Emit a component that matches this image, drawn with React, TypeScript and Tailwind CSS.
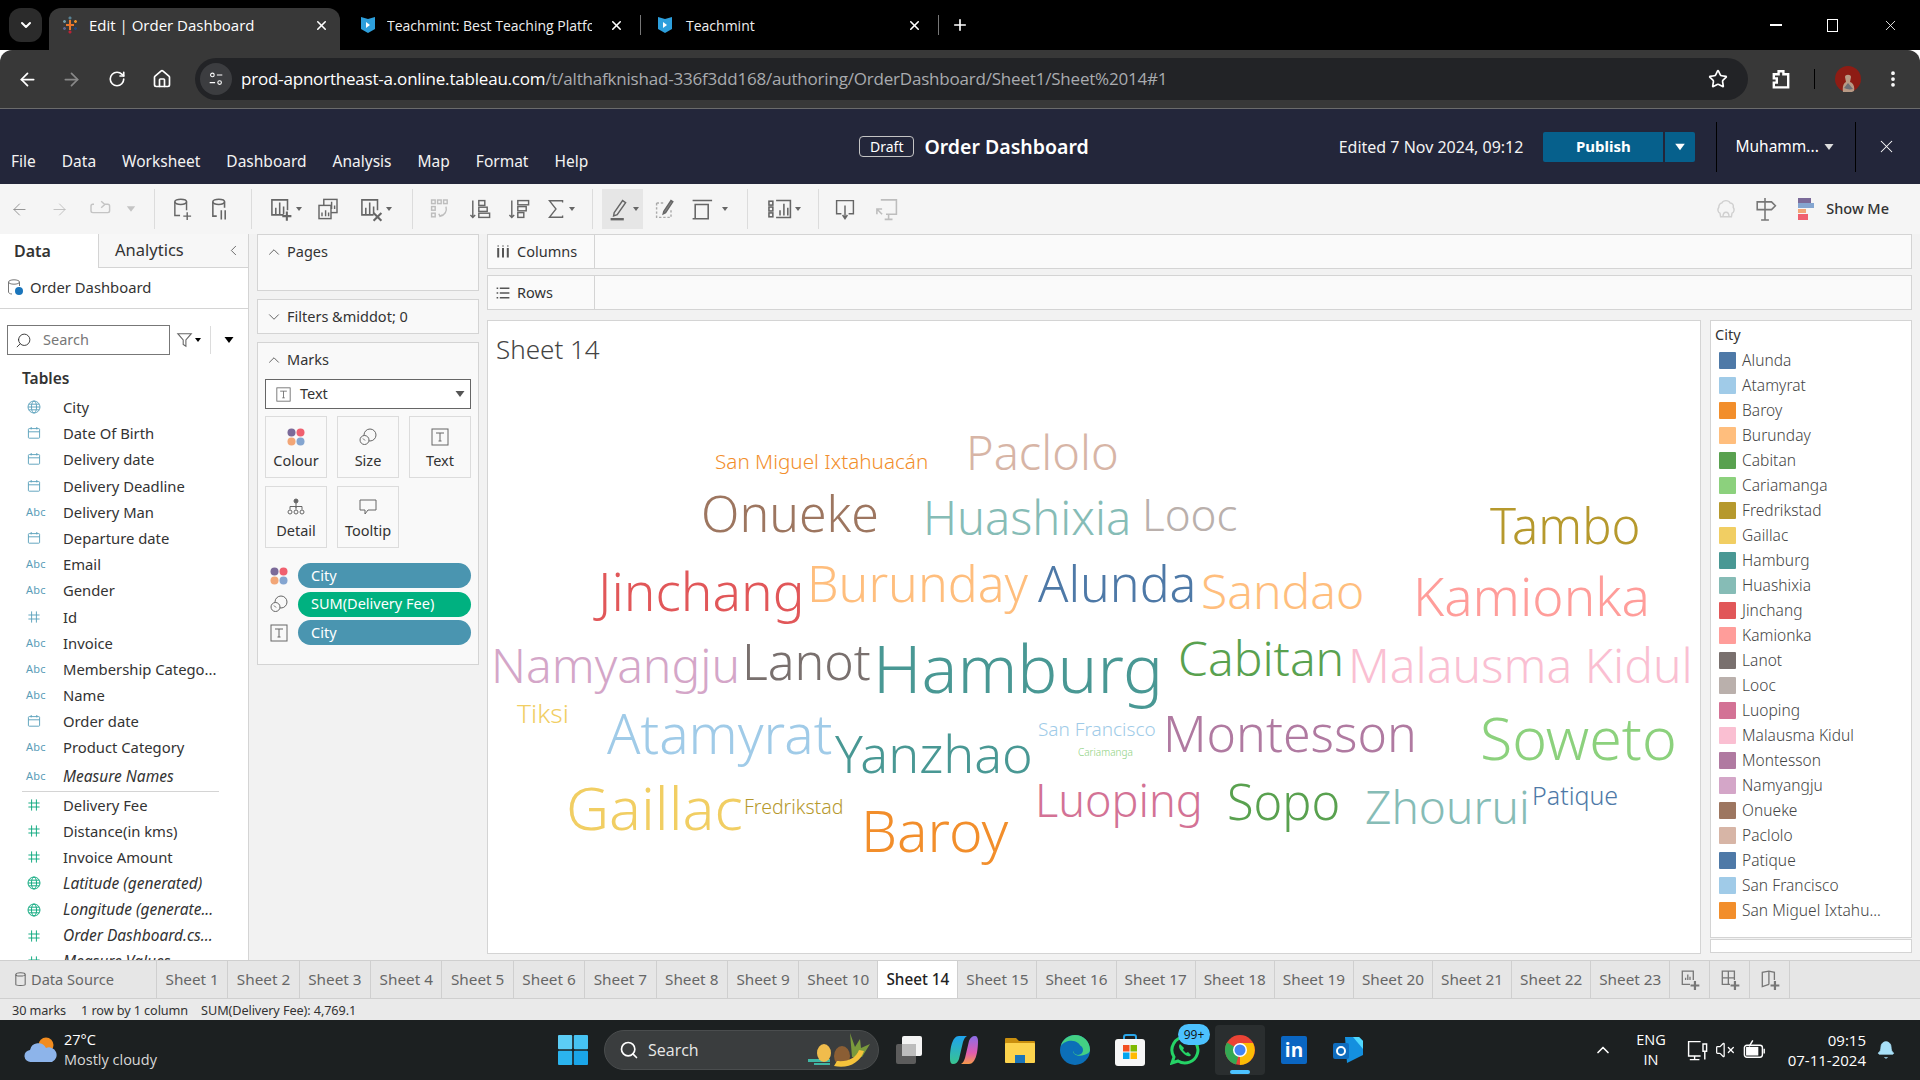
import { ArrowLeft, ArrowRight, Bell, ChevronDown, ChevronLeft, ChevronUp, Home, MoreVertical, Plus, RotateCw, Search, Star, VolumeX, X } from 'lucide-react';

const tableau20 = ['#4e79a7', '#a0cbe8', '#f28e2b', '#ffbe7d', '#59a14f', '#8cd17d', '#b6992d', '#f1ce63', '#499894', '#86bcb6', '#e15759', '#ff9d9a', '#79706e', '#bab0ac', '#d37295', '#fabfd2', '#b07aa1', '#d4a6c8', '#9d7660', '#d7b5a6', '#4e79a7', '#a0cbe8', '#f28e2b'];
const legend = ['Alunda', 'Atamyrat', 'Baroy', 'Burunday', 'Cabitan', 'Cariamanga', 'Fredrikstad', 'Gaillac', 'Hamburg', 'Huashixia', 'Jinchang', 'Kamionka', 'Lanot', 'Looc', 'Luoping', 'Malausma Kidul', 'Montesson', 'Namyangju', 'Onueke', 'Paclolo', 'Patique', 'San Francisco', 'San Miguel Ixtahu...'];

const words = [
  ['San Miguel Ixtahuacán', 'left-[227px] top-[140px] text-[20.7px] text-[#f28e2b]'],
  ['Paclolo', 'left-[478px] top-[131px] text-[47px] text-[#d7b5a6]'],
  ['Onueke', 'left-[213px] top-[192px] text-[50px] text-[#9d7660]'],
  ['Huashixia', 'left-[435px] top-[196px] text-[47px] text-[#86bcb6]'],
  ['Looc', 'left-[654px] top-[193px] text-[44px] text-[#bab0ac]'],
  ['Tambo', 'left-[1002px] top-[204px] text-[49px] text-[#b6992d]'],
  ['Jinchang', 'left-[110px] top-[270px] text-[53.2px] text-[#e15759]'],
  ['Burunday', 'left-[319px] top-[262px] text-[50px] text-[#ffbe7d]'],
  ['Alunda', 'left-[550px] top-[262px] text-[50px] text-[#4e79a7]'],
  ['Sandao', 'left-[713px] top-[270px] text-[48px] text-[#ffbe7d]'],
  ['Kamionka', 'left-[925px] top-[274px] text-[53px] text-[#ff9d9a]'],
  ['Namyangju', 'left-[3px] top-[344px] text-[48px] text-[#d4a6c8]'],
  ['Lanot', 'left-[254px] top-[340px] text-[50px] text-[#79706e]'],
  ['Hamburg', 'left-[385px] top-[346px] text-[67px] text-[#499894]'],
  ['Cabitan', 'left-[690px] top-[337px] text-[48px] text-[#59a14f]'],
  ['Malausma Kidul', 'left-[860px] top-[344px] text-[48px] text-[#fabfd2]'],
  ['Tiksi', 'left-[29px] top-[392px] text-[26.5px] text-[#f1ce63]'],
  ['Atamyrat', 'left-[119px] top-[411px] text-[55px] text-[#a0cbe8]'],
  ['Yanzhao', 'left-[347px] top-[432px] text-[52px] text-[#499894]'],
  ['San Francisco', 'left-[550px] top-[408px] text-[19px] text-[#a0cbe8]'],
  ['Cariamanga', 'left-[590px] top-[431px] text-[10px] text-[#8cd17d]'],
  ['Montesson', 'left-[675px] top-[412px] text-[50px] text-[#b07aa1]'],
  ['Soweto', 'left-[992px] top-[416px] text-[59px] text-[#8cd17d]'],
  ['Gaillac', 'left-[78px] top-[486px] text-[59.5px] text-[#f1ce63]'],
  ['Fredrikstad', 'left-[256px] top-[486px] text-[19.5px] text-[#b6992d]'],
  ['Baroy', 'left-[373px] top-[509px] text-[57px] text-[#f28e2b]'],
  ['Luoping', 'left-[547px] top-[478px] text-[45px] text-[#d37295]'],
  ['Sopo', 'left-[739px] top-[480px] text-[48.7px] text-[#59a14f]'],
  ['Zhourui', 'left-[877px] top-[485px] text-[46px] text-[#86bcb6]'],
  ['Patique', 'left-[1044px] top-[474px] text-[25px] text-[#4e79a7]'],
];

type Kind = 'geo' | 'date' | 'abc' | 'num' | 'mnum' | 'mgeo';
const fields: [Kind, string, boolean?][] = [
  ['geo', 'City'], ['date', 'Date Of Birth'], ['date', 'Delivery date'], ['date', 'Delivery Deadline'], ['abc', 'Delivery Man'], ['date', 'Departure date'], ['abc', 'Email'], ['abc', 'Gender'], ['num', 'Id'], ['abc', 'Invoice'], ['abc', 'Membership Catego...'], ['abc', 'Name'], ['date', 'Order date'], ['abc', 'Product Category'],
];
const measures: [Kind, string, boolean?][] = [
  ['mnum', 'Delivery Fee'], ['mnum', 'Distance(in kms)'], ['mnum', 'Invoice Amount'], ['mgeo', 'Latitude (generated)', true], ['mgeo', 'Longitude (generate...', true], ['mnum', 'Order Dashboard.cs...', true], ['mnum', 'Measure Values', true],
];
const sheets = [1, 2, 3, 4, 5, 6, 7, 8, 9, 10, 14, 15, 16, 17, 18, 19, 20, 21, 22, 23];

function Glyph({ className, children, size = 20 }: { className?: string; children: React.ReactNode; size?: number }) {
  return (
    <svg width={size} height={size} viewBox="0 0 20 20" fill="none" stroke="currentColor" strokeWidth="1.2" className={className}>
      {children}
    </svg>
  );
}

function Caret({ className = 'text-[#666]' }: { className?: string }) {
  return <span className={`inline-block h-0 w-0 shrink-0 border-x-[3px] border-t-[4px] border-x-transparent border-t-current ${className}`} />;
}

function FieldIcon({ kind }: { kind: Kind }) {
  const blue = 'text-[#5ea3bd]';
  const green = 'text-[#10a97f]';
  if (kind === 'abc') return <span className="w-[22px] text-[11px] tracking-[0.2px] text-[#5a9db8]">Abc</span>;
  if (kind === 'date') {
    return (
      <Glyph size={16} className={blue}>
        <rect x="3" y="4.5" width="14" height="12" rx="1" />
        <path d="M3 8.5h14M6.5 2.5v3M13.5 2.5v3" />
      </Glyph>
    );
  }
  if (kind === 'num' || kind === 'mnum') {
    return (
      <Glyph size={16} className={kind === 'num' ? blue : green}>
        <path d="M7 3v14M13 3v14M3 7.5h14M3 12.5h14" />
      </Glyph>
    );
  }
  return (
    <Glyph size={16} className={kind === 'geo' ? blue : green}>
      <circle cx="10" cy="10" r="7.5" />
      <ellipse cx="10" cy="10" rx="3.2" ry="7.5" />
      <path d="M2.5 10h15M3.5 6.5h13M3.5 13.5h13" />
    </Glyph>
  );
}

function FieldRow({ kind, name, italic }: { kind: Kind; name: string; italic?: boolean }) {
  return (
    <div className="flex h-[26.2px] items-center">
      <span className="flex w-[63px] shrink-0 justify-start pl-[26px]"><FieldIcon kind={kind} /></span>
      <span className={`whitespace-nowrap text-[#333] ${italic ? 'text-[15.5px] italic' : 'text-[14.8px]'}`}>{name}</span>
    </div>
  );
}

function ColourDots({ size = 18 }: { size?: number }) {
  return (
    <svg width={size} height={size} viewBox="0 0 18 18">
      <circle cx="4.5" cy="4.5" r="4" fill="#7b6a99" />
      <circle cx="13.5" cy="4.5" r="4" fill="#f0606f" />
      <circle cx="4.5" cy="13.5" r="4" fill="#f2a677" />
      <circle cx="13.5" cy="13.5" r="4" fill="#84a5d0" />
    </svg>
  );
}

function SizeIcon() {
  return (
    <svg width="18" height="18" viewBox="0 0 18 18" fill="none" stroke="#666" strokeWidth="1">
      <circle cx="11" cy="7" r="6" />
      <circle cx="5.5" cy="12" r="4.5" fill="#f9f9f9" />
      <path d="M4 10.5l2 2" />
    </svg>
  );
}

function TextBox({ size = 18 }: { size?: number }) {
  return (
    <svg width={size} height={size} viewBox="0 0 18 18" fill="none" stroke="#666" strokeWidth="1">
      <rect x="1" y="1" width="16" height="16" />
      <path d="M5 5h8M9 5v8M7.5 13h3" />
    </svg>
  );
}

function MarkButton({ label, children }: { label: string; children: React.ReactNode }) {
  return (
    <div className="flex h-[62px] w-[62px] flex-col items-center border border-[#dcdcdc] pt-[10px]">
      <div className="flex h-[20px] items-center">{children}</div>
      <span className="mt-[4px] text-[14.5px] leading-[18px] text-[#333]">{label}</span>
    </div>
  );
}

function ToolIcon({ w, children, dropdown, active }: { w: string; children: React.ReactNode; dropdown?: boolean; active?: boolean }) {
  return (
    <div className={`flex h-[40px] shrink-0 items-center justify-center gap-[2px] text-[#666] ${w} ${active ? 'bg-[#e6e6e6]' : ''}`}>
      {children}
      {dropdown && <Caret />}
    </div>
  );
}

function Sep({ className }: { className: string }) {
  return <div className={`h-[40px] w-px shrink-0 bg-[#dcdcdc] ${className}`} />;
}

function Toolbar() {
  return (
    <div className="flex h-[50px] items-center bg-[#f5f5f5] pl-[6px] pr-[31px]">
      <ToolIcon w="w-[26px]"><ArrowLeft size={19} strokeWidth={1.1} className="text-[#888]" /></ToolIcon>
      <ToolIcon w="w-[26px] ml-[14px]"><ArrowRight size={19} strokeWidth={1.1} className="text-[#bbb]" /></ToolIcon>
      <ToolIcon w="w-[54px] ml-[12px]">
        <Glyph size={24} className="text-[#c4c4c4]"><path d="M13 6h3.5a1.5 1.5 0 0 1 1.5 1.5v4a1.5 1.5 0 0 1-1.5 1.5H4a1.5 1.5 0 0 1-1.5-1.5v-4A1.5 1.5 0 0 1 4 6h1M11 3.5l3 2.7-3 2.7" /></Glyph>
        <Caret className="ml-[14px] scale-[1.4] text-[#c4c4c4]" />
      </ToolIcon>
      <Sep className="ml-[16px] mr-[7px]" />
      <ToolIcon w="w-[40px]">
        <Glyph size={26}><ellipse cx="9" cy="4.5" rx="4.5" ry="2" /><path d="M4.5 4.5v10.5h4M13.5 4.5V11M14 12.5v6M11 15.5h6" strokeWidth="1.1" /></Glyph>
      </ToolIcon>
      <ToolIcon w="w-[36px]">
        <Glyph size={26}><ellipse cx="9" cy="4.5" rx="4.5" ry="2" /><path d="M4.5 4.5v11h3M13.5 4.5V9M11 11v7M14 11v7" /></Glyph>
      </ToolIcon>
      <Sep className="ml-[13px] mr-[13px] w-[2px]" />
      <ToolIcon w="w-[40px]" dropdown>
        <Glyph size={26}><path d="M12 14.5H3V3h12v8M6 14V9M9 14V5M12 14V8" /><path d="M14.5 12v7M11 15.5h7" strokeWidth="1.6" /></Glyph>
      </ToolIcon>
      <ToolIcon w="w-[34px] ml-[6px]">
        <Glyph size={24}><rect x="6.5" y="2" width="11" height="11" /><rect x="2.5" y="7" width="10" height="11" fill="#f5f5f5" /><path d="M5 16v-3M8 16v-5M10.5 16v-3M13 10V4M15.5 10V7" /></Glyph>
      </ToolIcon>
      <ToolIcon w="w-[40px] ml-[10px]" dropdown>
        <Glyph size={26}><path d="M12 14.5H3V3h12v8M6 14V9M9 14V5M12 14V8" /><path d="M12 13l6 6M18 13l-6 6" strokeWidth="1.6" /></Glyph>
      </ToolIcon>
      <Sep className="ml-[17px] mr-[10px]" />
      <ToolIcon w="w-[34px]">
        <Glyph size={24} className="text-[#bdbdbd]"><rect x="3" y="2.5" width="3" height="3" /><rect x="8" y="2.5" width="3" height="3" /><rect x="13" y="2.5" width="3" height="3" /><rect x="3" y="8" width="3" height="3" /><rect x="3" y="13.5" width="3" height="3" /><path d="M15 8c1 4-1 7-5 8M9 14l1 2 2-1" /></Glyph>
      </ToolIcon>
      <ToolIcon w="w-[30px] ml-[8px]">
        <Glyph size={24}><path d="M4 3v14M2 15l2 2 2-2" /><rect x="9" y="3" width="5" height="4" /><rect x="9" y="8.5" width="7" height="3.5" /><rect x="9" y="13.5" width="9" height="3.5" /></Glyph>
      </ToolIcon>
      <ToolIcon w="w-[30px] ml-[9px]">
        <Glyph size={24}><path d="M4 3v14M2 15l2 2 2-2" /><rect x="9" y="3" width="9" height="3.5" /><rect x="9" y="8" width="7" height="3.5" /><rect x="9" y="13" width="5" height="4" /></Glyph>
      </ToolIcon>
      <ToolIcon w="w-[30px] ml-[11px]" dropdown>
        <Glyph size={22}><path d="M16 4V2.5H4l6 7.5-6 7.5h12V16" /></Glyph>
      </ToolIcon>
      <Sep className="ml-[17px] mr-[9px]" />
      <ToolIcon w="w-[41px]" dropdown active>
        <Glyph size={24}><path d="M6 13l7-10 2.5 1.7-7 10-3 1z" /><path d="M3 18.5h11" strokeWidth="2" /></Glyph>
      </ToolIcon>
      <ToolIcon w="w-[30px] ml-[7px]">
        <Glyph size={24} className="text-[#aaa]"><path d="M3 5h7M3 5v12h12v-7" strokeDasharray="2 1.5" /><path d="M9 12l6-9 1.5 1-6 9-2 1z" fill="#888" stroke="#666" /></Glyph>
      </ToolIcon>
      <ToolIcon w="w-[38px] ml-[10px]">
        <Glyph size={26}><path d="M2 3.5h15M4 6.5h10v11H4zM2 17.5h3M14 6.5v11" /></Glyph>
        <Caret className="ml-[4px]" />
      </ToolIcon>
      <Sep className="ml-[19px] mr-[16px]" />
      <ToolIcon w="w-[40px]" dropdown>
        <Glyph size={26}><rect x="1.5" y="4" width="3" height="3" /><rect x="1.5" y="8.5" width="3" height="3" /><rect x="1.5" y="13" width="3" height="3" /><path d="M7 3.5h11v13H7" /><path d="M10 15v-4M13 15V6M16 15v-6" /></Glyph>
      </ToolIcon>
      <Sep className="ml-[14px] mr-[12px]" />
      <ToolIcon w="w-[28px]">
        <Glyph size={24}><path d="M7 14H3V3h14v11h-4M10 7v10M8 15l2 3 2-3" /></Glyph>
      </ToolIcon>
      <ToolIcon w="w-[28px] ml-[13px]">
        <Glyph size={26} className="text-[#bdbdbd]"><path d="M6 3h12v11H10M12 14v4M9 18h6M3 10l4 4M3 14V10h4" /></Glyph>
      </ToolIcon>
      <div className="ml-auto flex items-center">
        <Glyph size={24} className="text-[#d0d0d0]"><path d="M10 3c2 0 3 1 3.5 2 2 0 3 2 2.5 3.5 1.5 2 .5 4.5-1 5l-.5 3h-9l-.5-3c-1.5-.5-2.5-3-1-5C4 7 5 5 6.5 5 7 4 8 3 10 3z" /><path d="M7.5 16.5c0-5 5-5 5 0" /></Glyph>
        <Glyph size={26} className="ml-[14px] text-[#777]"><path d="M10 1.5v17M7 18.5h6M4 4.5h11l3 3-3 3H4z" /></Glyph>
        <svg width="16" height="22" viewBox="0 0 16 22" className="ml-[20px]">
          <rect x="0" y="0" width="13" height="5" fill="#7b6a99" />
          <rect x="0" y="5" width="16" height="5" fill="#84a5d0" />
          <rect x="0" y="11" width="8" height="4" fill="#f2a677" />
          <rect x="0" y="16" width="10" height="6" fill="#f0606f" />
        </svg>
        <span className="ml-[12px] text-[14.5px] font-medium text-[#333]">Show Me</span>
      </div>
    </div>
  );
}

function TableauLogo() {
  return (
    <svg width="18" height="18" viewBox="0 0 18 18" strokeWidth="1.5" fill="none">
      <path d="M9 4v10M5 9h8" stroke="#e8762c" strokeWidth="2" />
      <path d="M9 .5v3M7.5 2h3" stroke="#5b879b" />
      <path d="M9 14.5v3M7.5 16h3" stroke="#c72035" />
      <path d="M3.5 4v3M2 5.5h3" stroke="#7099a6" />
      <path d="M14.5 4v3M13 5.5h3" stroke="#eb9129" />
      <path d="M3.5 11v3M2 12.5h3" stroke="#5b6591" />
      <path d="M14.5 11v3M13 12.5h3" stroke="#1f457e" />
    </svg>
  );
}

function TeachmintLogo() {
  return (
    <svg width="16" height="18" viewBox="0 0 16 18" className="shrink-0">
      <path d="M1 1l7 2 7-2v12l-7 4-7-4z" fill="#2d9fdc" />
      <path d="M6 6l4 3-4 3z" fill="#fff" />
    </svg>
  );
}

function BrowserChrome() {
  return (
    <div className="font-['Open_Sans',sans-serif]">
      <div className="flex h-[50px] bg-black pl-[9px] pt-[8px]">
        <div className="flex h-[34px] w-[33px] items-center justify-center rounded-[12px] bg-[#2b2b2b]"><ChevronDown size={16} strokeWidth={3} className="text-white" /></div>
        <div className="ml-[7px] flex h-[42px] w-[291px] items-center rounded-t-[12px] bg-[#383838] pb-[8px] pl-[12px] pr-[11px] text-[15px] text-white">
          <TableauLogo />
          <span className="ml-[10px] flex-1 whitespace-nowrap">Edit | Order Dashboard</span>
          <X size={15} strokeWidth={2.5} />
        </div>
        <div className="flex h-[42px] w-[301px] items-center pb-[8px] pl-[20px] text-[14px] text-[#eee]">
          <TeachmintLogo />
          <span className="ml-[11px] w-[205px] overflow-hidden whitespace-nowrap">Teachmint: Best Teaching Platform</span>
          <X size={15} strokeWidth={2.5} className="ml-auto text-white" />
          <span className="ml-[16px] h-[20px] w-px shrink-0 bg-[#777]" />
        </div>
        <div className="flex h-[42px] w-[298px] items-center pb-[8px] pl-[16px] text-[14px] text-[#eee]">
          <TeachmintLogo />
          <span className="ml-[13px]">Teachmint</span>
          <X size={15} strokeWidth={2.5} className="ml-auto text-white" />
          <span className="ml-[16px] h-[20px] w-px shrink-0 bg-[#777]" />
        </div>
        <div className="flex h-[42px] items-center pb-[8px] pl-[12px]"><Plus size={18} strokeWidth={2.2} className="text-white" /></div>
        <div className="ml-auto flex h-[42px] items-center pb-[8px] pr-[21px] text-white">
          <span className="mr-[45px] h-[1.5px] w-[12px] bg-white" />
          <span className="mr-[44px] h-[13px] w-[11px] border border-white" />
          <X size={17} strokeWidth={1.2} />
        </div>
      </div>
      <div className="flex h-[59px] items-center rounded-t-[12px] border-b border-[#6b6b6b] bg-[#383838] pl-[17px]">
        <ArrowLeft size={21} strokeWidth={2} className="text-white" />
        <ArrowRight size={21} strokeWidth={2} className="ml-[23px] text-[#888]" />
        <RotateCw size={18} strokeWidth={2.2} className="ml-[26px] text-white" />
        <Home size={20} strokeWidth={2} className="ml-[26px] text-white" />
        <div className="ml-[23px] flex h-[42px] w-[1553px] items-center rounded-full bg-[#222326] pl-[5px] pr-[20px]">
          <span className="flex h-[32px] w-[32px] items-center justify-center rounded-full bg-[#3c3d40]">
            <Glyph size={18} className="text-white"><circle cx="6" cy="5.5" r="2" /><path d="M11 5.5h6M3 14h6" /><circle cx="14" cy="14" r="2" /></Glyph>
          </span>
          <span className="ml-[9px] whitespace-nowrap text-[17px] tracking-[-0.2px] text-white">prod-apnortheast-a.online.tableau.com<span className="text-[#a9abaf]">/t/althafknishad-336f3dd168/authoring/OrderDashboard/Sheet1/Sheet%2014#1</span></span>
          <Star size={20} strokeWidth={2} className="ml-auto text-white" />
        </div>
        <Glyph size={24} className="ml-[21px] text-white"><path d="M4 6h4V3.5h4V6h4v11H4v-4h2.5V9.5H4z" strokeWidth="2" /></Glyph>
        <span className="ml-[21px] h-[20px] w-px bg-black" />
        <svg width="26" height="26" viewBox="0 0 26 26" className="ml-[20px]">
          <circle cx="13" cy="13" r="13" fill="#8e1c14" />
          <path d="M8 26c-1-6 1-9 3-10l-1-5c0-3 6-3 6 0l-1 5c3 1 5 4 4 9a13 13 0 0 1-11 1z" fill="#b89a85" />
          <path d="M9 22l4-5 5 6a13 13 0 0 1-9-1z" fill="#6d6f76" />
        </svg>
        <MoreVertical size={20} strokeWidth={2.5} className="ml-[22px] text-white" />
      </div>
    </div>
  );
}

function Header() {
  const menus = ['File', 'Data', 'Worksheet', 'Dashboard', 'Analysis', 'Map', 'Format', 'Help'];
  return (
    <div className="flex h-[75px] bg-[#23263a] text-white">
      <div className="flex w-[620px] items-end gap-[26px] pb-[11px] pl-[11px] text-[15.5px] leading-[24px] text-[#f3f3f3]">
        {menus.map((m) => <span key={m}>{m}</span>)}
      </div>
      <div className="ml-[239px] flex h-[75px] flex-1 items-center">
        <span className="rounded-[4px] border border-[#c4c4c4] px-[10px] text-[14px] leading-[19px]">Draft</span>
        <span className="ml-[10px] text-[19.5px] font-semibold">Order Dashboard</span>
        <span className="ml-[250px] text-[16px] text-[#f3f3f3]">Edited 7 Nov 2024, 09:12</span>
        <span className="ml-[20px] flex h-[30px] w-[120px] items-center justify-center rounded-l-[2px] bg-[#06608c] text-[15px] font-bold">Publish</span>
        <span className="ml-[2px] flex h-[30px] w-[30px] items-center justify-center rounded-r-[2px] bg-[#06608c]"><Caret className="scale-[1.6] text-white" /></span>
        <span className="ml-[21px] h-[50px] w-px bg-black" />
        <span className="ml-[18px] text-[15.5px]">Muhamm...</span>
        <Caret className="ml-[7px] scale-[1.5] text-[#ddd]" />
        <span className="ml-[23px] h-[50px] w-px bg-black" />
        <X size={21} strokeWidth={1.2} className="ml-[20px]" />
      </div>
    </div>
  );
}

function DataPane() {
  return (
    <div className="flex w-[249px] shrink-0 flex-col overflow-hidden border-r border-[#d4d4d4] bg-white">
      <div className="flex h-[34px] shrink-0">
        <div className="flex w-[98px] items-center pl-[14px] text-[16px] font-semibold text-[#333]">Data</div>
        <div className="flex flex-1 items-center border-b border-l border-[#d4d4d4] bg-[#f7f7f7] pl-[16px] text-[16.5px] text-[#333]">
          Analytics
          <ChevronLeft size={17} strokeWidth={1.2} className="ml-auto mr-[6px] text-[#555]" />
        </div>
      </div>
      <div className="flex h-[41px] shrink-0 items-center border-b border-[#d4d4d4] pb-[2px] pl-[7px] text-[14.8px] text-[#333]">
        <svg width="17" height="17" viewBox="0 0 17 17" fill="none" stroke="#777">
          <ellipse cx="7" cy="3" rx="5.5" ry="2.2" />
          <path d="M1.5 3v10c0 1 1.5 2 3.5 2M12.5 3v4" />
          <circle cx="12" cy="12" r="4" fill="#1a75bb" stroke="none" />
        </svg>
        <span className="ml-[6px]">Order Dashboard</span>
      </div>
      <div className="mt-[16px] flex h-[30px] shrink-0 items-center pl-[7px]">
        <div className="flex h-[30px] w-[163px] items-center border border-[#777] pl-[7px] text-[14.5px] text-[#777]">
          <Search size={17} strokeWidth={1.3} className="-scale-x-100 text-[#333]" />
          <span className="ml-[11px]">Search</span>
        </div>
        <Glyph size={18} className="ml-[6px] text-[#666]"><path d="M2 3h15l-6 7v7l-3-2v-5z" /></Glyph>
        <Caret className="ml-[1px]" />
        <span className="ml-[9px] h-[28px] w-px bg-[#dcdcdc]" />
        <Caret className="ml-[15px] scale-[1.5]" />
      </div>
      <div className="mt-[13px] flex h-[20px] shrink-0 items-center pl-[22px] text-[15.5px] font-semibold leading-[20px] text-[#333]">Tables</div>
      <div className="mt-[6px]">
        {fields.map(([k, n, i]) => <FieldRow key={n} kind={k} name={n} italic={i} />)}
        <div className="mt-[3px]"><FieldRow kind="abc" name="Measure Names" italic /></div>
        <div className="ml-[22px] mr-[29px] mt-[1px] border-t border-[#d4d4d4]" />
        <div>
          {measures.map(([k, n, i]) => <FieldRow key={n} kind={k} name={n} italic={i} />)}
        </div>
      </div>
    </div>
  );
}

function Card({ title, open, className, children }: { title: string; open: boolean; className: string; children?: React.ReactNode }) {
  return (
    <div className={`border border-[#d4d4d4] bg-[#f9f9f9] ${className}`}>
      <div className="flex h-[33px] items-center pl-[7px] text-[14.5px] text-[#333]">
        {open ? <ChevronUp size={18} strokeWidth={1.2} className="text-[#555]" /> : <ChevronDown size={18} strokeWidth={1.2} className="text-[#555]" />}
        <span className="ml-[4px]">{title}</span>
      </div>
      {children}
    </div>
  );
}

function Pill({ label, green }: { label: string; green?: boolean }) {
  return (
    <div className={`flex h-[25px] w-[173px] items-center rounded-full pl-[13px] text-[14.5px] text-white ${green ? 'bg-[#00b180]' : 'bg-[#4a95b0]'}`}>{label}</div>
  );
}

function ShelvesPane() {
  return (
    <div className="flex w-[238px] shrink-0 flex-col gap-[8px] bg-[#f2f2f2] px-[8px]">
      <Card title="Pages" open className="h-[57px]" />
      <Card title="Filters &amp;middot; 0" open={false} className="h-[35px]" />
      <Card title="Marks" open className="h-[323px]">
        <div className="px-[7px]">
          <div className="mt-[3px] flex h-[30px] items-center border border-[#666] bg-white pl-[10px] pr-[7px] text-[14.5px] text-[#333]">
            <TextBox size={15} />
            <span className="ml-[9px]">Text</span>
            <Caret className="ml-auto scale-[1.5] text-[#555]" />
          </div>
          <div className="mt-[7px] grid grid-cols-[62px_62px_62px] gap-x-[10px] gap-y-[8px]">
            <MarkButton label="Colour"><ColourDots /></MarkButton>
            <MarkButton label="Size"><SizeIcon /></MarkButton>
            <MarkButton label="Text"><TextBox /></MarkButton>
            <MarkButton label="Detail">
              <svg width="18" height="18" viewBox="0 0 18 18" fill="none" stroke="#666">
                <circle cx="9" cy="3" r="2" fill="#666" />
                <path d="M9 5v5M3 8.5h12M3 8.5v3M15 8.5v3M9 8.5v3" />
                <circle cx="3" cy="14" r="2" /><circle cx="9" cy="14" r="2" /><circle cx="15" cy="14" r="2" />
              </svg>
            </MarkButton>
            <MarkButton label="Tooltip">
              <svg width="18" height="18" viewBox="0 0 18 18" fill="none" stroke="#666">
                <path d="M1 2h16v10H9l-3 4v-4H1z" />
              </svg>
            </MarkButton>
          </div>
          <div className="mt-[15px] flex flex-col gap-[3.5px]">
            <div className="flex items-center gap-[10px] pl-[5px]"><ColourDots /><Pill label="City" /></div>
            <div className="flex items-center gap-[10px] pl-[5px]"><SizeIcon /><Pill label="SUM(Delivery Fee)" green /></div>
            <div className="flex items-center gap-[10px] pl-[5px]"><TextBox /><Pill label="City" /></div>
          </div>
        </div>
      </Card>
    </div>
  );
}

function Shelf({ label, icon }: { label: string; icon: React.ReactNode }) {
  return (
    <div className="flex h-[35px] border border-[#d4d4d4] bg-[#fafafa]">
      <div className="flex w-[107px] items-center gap-[6px] border-r border-[#d4d4d4] pl-[7px] text-[14.5px] text-[#333]">
        {icon}
        {label}
      </div>
    </div>
  );
}

function Canvas() {
  return (
    <div className="flex min-w-0 flex-1 flex-col bg-[#f2f2f2] pr-[8px]">
      <Shelf
        label="Columns"
        icon={<Glyph size={16} className="text-[#555]"><path d="M4 5v12M10 5v12M16 5v12" strokeWidth="2.5" /><path d="M3 2.5h2M9 2.5h2M15 2.5h2" strokeWidth="1.5" /></Glyph>}
      />
      <div className="h-[6px]" />
      <Shelf
        label="Rows"
        icon={<Glyph size={16} className="text-[#555]"><path d="M6 4h12M6 10h12M6 16h12" strokeWidth="2" /><path d="M2 4h2M2 10h2M2 16h2" strokeWidth="2" /></Glyph>}
      />
      <div className="mt-[10px] flex min-h-0 flex-1 gap-[9px]">
        <div className="relative h-[634px] flex-1 overflow-hidden border border-[#d4d4d4] bg-white">
          <span className="absolute left-[8px] top-[12px] text-[26px] font-light leading-[32px] text-[#444]">Sheet 14</span>
          {words.map(([t, c]) => (
            <span key={t} className={`absolute -translate-y-1/2 whitespace-nowrap font-light leading-none ${c}`}>{t}</span>
          ))}
        </div>
        <div className="flex w-[202px] shrink-0 flex-col">
          <div className="h-[618px] overflow-hidden border border-[#d4d4d4] bg-white pl-[4px]">
            <div className="mt-[4px] h-[18px] text-[14.5px] leading-[18px] text-[#333]">City</div>
            <div className="mt-[5px]">
              {legend.map((n, i) => (
                <div key={n} className="flex h-[25px] items-center pl-[4px]">
                  <svg width="17" height="17" viewBox="0 0 17 17"><rect width="17" height="17" rx="1" fill={tableau20[i]} /></svg>
                  <span className="ml-[6px] whitespace-nowrap text-[15.5px] font-light tracking-[0.05px] text-[#444]">{n}</span>
                </div>
              ))}
            </div>
          </div>
          <div className="mt-[1px] h-[14px] border border-[#d4d4d4] bg-white" />
        </div>
      </div>
    </div>
  );
}

function SheetTabs() {
  return (
    <div className="flex h-[39px] border-y border-[#cfcfcf] bg-[#e6e6e6] text-[15.3px] text-[#666]">
      <div className="flex w-[157px] items-center border-r border-[#cfcfcf] pl-[12px] text-[14.6px]">
        <Glyph size={17} className="text-[#666]"><ellipse cx="10" cy="4" rx="5.5" ry="2" /><path d="M4.5 4v12c0 1.5 11 1.5 11 0V4" /></Glyph>
        <span className="ml-[2px] whitespace-nowrap">Data Source</span>
      </div>
      {sheets.map((s) => (
        s === 14
          ? <div key={s} className="flex w-[80px] items-center justify-center whitespace-nowrap border-r border-[#cfcfcf] bg-white font-medium text-[#222]">Sheet 14</div>
          : <div key={s} className={`flex items-center whitespace-nowrap border-r border-[#cfcfcf] ${s < 10 ? 'px-[8.5px]' : 'px-[8px]'}`}>Sheet {s}</div>
      ))}
      {[0, 1, 2].map((i) => (
        <div key={i} className="flex w-[40px] items-center justify-center border-r border-[#cfcfcf]">
          <Glyph size={22} className="text-[#777]">
            {i === 0 && <path d="M10 14H3V2h10v8M6 10V8M8 10V5M10 10V7" />}
            {i === 1 && <path d="M10 14H3V2h11v8M8.5 2v12M3 8h11" />}
            {i === 2 && <path d="M9 14l-6 2V3l6-1 5 1v7M9 2v12" />}
            <path d="M14.5 11v8M10.5 15h8" strokeWidth="2" />
          </Glyph>
        </div>
      ))}
    </div>
  );
}

function StatusBar() {
  return (
    <div className="flex h-[21px] items-center bg-[#eaeaea] pl-[12px] pt-[2px] text-[12.7px] tracking-[-0.1px] text-[#333]">
      <span>30 marks</span>
      <span className="ml-[15px]">1 row by 1 column</span>
      <span className="ml-[13px]">SUM(Delivery Fee): 4,769.1</span>
    </div>
  );
}

function Taskbar() {
  return (
    <div className="flex h-[60px] items-center bg-[#1c2021] pl-[24px] font-['Open_Sans',sans-serif] text-white">
      <svg width="34" height="28" viewBox="0 0 34 28">
        <circle cx="22" cy="9" r="7.5" fill="#f28c1f" />
        <path d="M7 26a6 6 0 0 1-1-12 8.5 8.5 0 0 1 16-2 7 7 0 0 1 6 14z" fill="#8db4ea" />
      </svg>
      <div className="ml-[6px] w-[110px] text-[14.5px] leading-[20px]">
        <div>27°C</div>
        <div className="text-[#d8d8d8]">Mostly cloudy</div>
      </div>
      <svg width="30" height="30" viewBox="0 0 30 30" className="ml-[384px]">
        <rect width="14.2" height="14.2" rx="1" fill="#5ccdf5" />
        <rect x="15.8" width="14.2" height="14.2" rx="1" fill="#46c2f2" />
        <rect y="15.8" width="14.2" height="14.2" rx="1" fill="#2bb4ee" />
        <rect x="15.8" y="15.8" width="14.2" height="14.2" rx="1" fill="#1aa5e8" />
      </svg>
      <div className="relative ml-[16px] flex h-[40px] w-[275px] items-center rounded-full border border-[#4a4d4e] bg-[#3a3d3e] pl-[14px] text-[16px] text-[#e8e8e8]">
        <Search size={20} strokeWidth={2} className="text-white" />
        <span className="ml-[9px]">Search</span>
        <svg width="64" height="38" viewBox="0 0 64 38" className="absolute right-[6px] top-0">
          <path d="M0 28h22v3H0zM6 32h16v2H6z" fill="#3fb7a5" />
          <ellipse cx="16" cy="22" rx="7" ry="9" fill="#f0bc4c" />
          <ellipse cx="34" cy="25" rx="8" ry="10" fill="#8b5e34" />
          <path d="M42 2l5 14 5-8 1 9 9-4-8 13h-10z" fill="#7a9a3c" />
          <path d="M26 35c14 3 26-3 30-15l-5-1c-3 8-11 12-22 11z" fill="#f5c33b" />
        </svg>
      </div>
      <svg width="30" height="30" viewBox="0 0 30 30" className="ml-[15px]">
        <rect x="2" y="9" width="20" height="20" rx="2" fill="#5c5c5c" />
        <rect x="8" y="1" width="20" height="20" rx="2" fill="#f4f4f4" />
        <rect x="8" y="9" width="14" height="12" fill="#bdbdbd" />
      </svg>
      <svg width="28" height="30" viewBox="0 0 28 30" className="ml-[26px]">
        <defs>
          <linearGradient id="copA" x1="0" y1="0" x2="0" y2="1"><stop offset="0" stopColor="#1fa3ee" /><stop offset="1" stopColor="#39c48f" /></linearGradient>
          <linearGradient id="copB" x1="0" y1="0" x2="0" y2="1"><stop offset="0" stopColor="#8b6ee8" /><stop offset="0.6" stopColor="#e05bb0" /><stop offset="1" stopColor="#f59a4a" /></linearGradient>
        </defs>
        <path d="M9 1h8c-2 1-3 3-4 6L9 24c-1 3-3 5-6 5-2 0-3-2-3-5C0 14 2 1 9 1z" fill="url(#copA)" />
        <path d="M19 29h-8c2-1 3-3 4-6l4-17c1-3 3-5 6-5 2 0 3 2 3 5 0 10-2 23-9 23z" fill="url(#copB)" />
      </svg>
      <svg width="30" height="30" viewBox="0 0 30 30" className="ml-[27px]">
        <path d="M0 4a1 1 0 0 1 1-1h10l3 3h15a1 1 0 0 1 1 1v3H0z" fill="#c98f0e" />
        <rect y="8" width="30" height="20" rx="1" fill="#fcd34d" />
        <rect x="10" y="20" width="10" height="8" fill="#1a75bb" />
      </svg>
      <svg width="30" height="30" viewBox="0 0 30 30" className="ml-[25px]">
        <circle cx="15" cy="15" r="15" fill="#0c6fb8" />
        <path d="M30 15c0-8-6-15-15-15C8 0 2 5 1 11c3-5 12-7 17-3 3 2 3 6 1 8h-6c0 4 6 6 11 4 4-1 6-3 6-5z" fill="#43d084" />
        <circle cx="18" cy="15" r="5" fill="#0c6fb8" />
      </svg>
      <svg width="30" height="32" viewBox="0 0 30 32" className="ml-[25px]">
        <path d="M9 6V3a2 2 0 0 1 2-2h8a2 2 0 0 1 2 2v3" fill="none" stroke="#2aa5e8" strokeWidth="2" />
        <rect y="5" width="30" height="27" rx="3" fill="#f6f6f6" />
        <rect x="8" y="11" width="6.5" height="6.5" fill="#f25022" />
        <rect x="15.5" y="11" width="6.5" height="6.5" fill="#7fba00" />
        <rect x="8" y="18.5" width="6.5" height="6.5" fill="#00a4ef" />
        <rect x="15.5" y="18.5" width="6.5" height="6.5" fill="#ffb900" />
      </svg>
      <div className="relative ml-[25px]">
        <svg width="30" height="30" viewBox="0 0 30 30">
          <path d="M15 2a13 13 0 0 0-11 20l-2 6 6-2a13 13 0 1 0 7-24z" fill="none" stroke="#25d366" strokeWidth="3" />
          <path d="M10 9c-2 2-1 5 3 9s7 4 8 2l-3-3-2 1-3-3 1-2z" fill="#25d366" />
        </svg>
        <span className="absolute left-[8px] top-[-11px] flex h-[21px] w-[32px] items-center justify-center rounded-full bg-[#4cc2ff] text-[12px] text-[#111]">99+</span>
      </div>
      <div className="relative ml-[15px] flex h-[50px] w-[50px] items-center justify-center rounded-[4px] bg-[#2a2e2f]">
        <svg width="30" height="30" viewBox="0 0 30 30">
          <circle cx="15" cy="15" r="15" fill="#ea4335" />
          <path d="M15 15L2 7.5a15 15 0 0 0 9 22z" fill="#34a853" />
          <path d="M15 8h13a15 15 0 0 1-13 22z" fill="#fbbc05" />
          <circle cx="15" cy="15" r="7" fill="#fff" />
          <circle cx="15" cy="15" r="5.5" fill="#4285f4" />
        </svg>
        <span className="absolute bottom-[1px] h-[4px] w-[20px] rounded-full bg-[#4cc2ff]" />
      </div>
      <div className="ml-[16px] flex h-[28px] w-[26px] items-center justify-center rounded-[2px] bg-[#0a66c2] text-[19px] font-bold">in</div>
      <svg width="30" height="30" viewBox="0 0 30 30" className="ml-[26px]">
        <path d="M12 2h14l4 4v14L14 28z" fill="#1490df" />
        <path d="M20 2h6l4 4v8z" fill="#50d9ff" />
        <rect y="8" width="16" height="16" rx="2" fill="#0f6cbd" />
        <circle cx="8" cy="16" r="4" fill="none" stroke="#fff" strokeWidth="2" />
      </svg>
      <ChevronUp size={20} strokeWidth={2} className="ml-[230px] text-white" />
      <div className="ml-[18px] w-[40px] text-center text-[14.5px] leading-[20px]">ENG<br />IN</div>
      <Glyph size={24} className="ml-[14px] text-white"><path d="M13 15H3V3h10M8 15v3M4 18h8M15 5h3v6h-3zM16.5 11v7" /></Glyph>
      <VolumeX size={20} strokeWidth={1.5} className="ml-[6px] text-white" />
      <Glyph size={24} className="ml-[7px] text-white"><rect x="2" y="6" width="15" height="10" rx="2" /><rect x="4" y="8" width="9" height="6" fill="#fff" /><path d="M18.5 9v4M9 2L6 7" /></Glyph>
      <div className="ml-[16px] w-[84px] text-right text-[15px] leading-[20px]">
        <div>09:15</div>
        <div>07-11-2024</div>
      </div>
      <Bell size={20} fill="#a8e0f8" strokeWidth={1} className="ml-[10px] text-[#a8e0f8]" />
    </div>
  );
}

export default function App() {
  return (
    <div className="flex h-[1080px] w-[1920px] flex-col overflow-hidden bg-white font-['Noto_Sans',sans-serif]">
      <BrowserChrome />
      <Header />
      <Toolbar />
      <div className="flex h-[726px]">
        <DataPane />
        <ShelvesPane />
        <Canvas />
      </div>
      <SheetTabs />
      <StatusBar />
      <Taskbar />
    </div>
  );
}
